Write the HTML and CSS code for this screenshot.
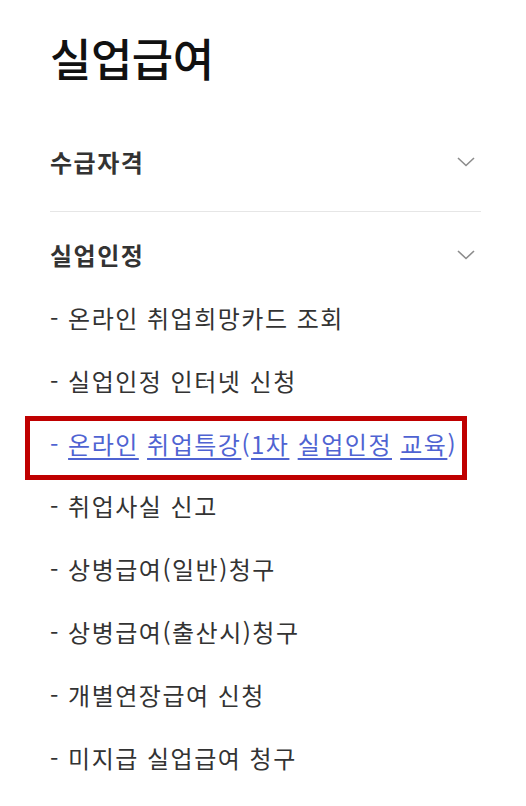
FILE: index.html
```html
<!DOCTYPE html>
<html lang="ko">
<head>
  <meta charset="UTF-8" />
  <title>실업급여</title>
  <link rel="stylesheet" href="styles.css">
</head>
<body>
  <div class="side-menu">
    <h2 class="menu-title">실업급여</h2>

    <div class="menu-group">
      <div class="group-head">
        <span class="group-name">수급자격</span>
        <svg class="chevron" width="18" height="10" viewBox="0 0 18 10"><path d="M1 1 L9 8.5 L17 1" fill="none" stroke="#8c8c8c" stroke-width="1.6"/></svg>
      </div>
    </div>

    <div class="menu-group open">
      <div class="group-head">
        <span class="group-name">실업인정</span>
        <svg class="chevron" width="18" height="10" viewBox="0 0 18 10"><path d="M1 1 L9 8.5 L17 1" fill="none" stroke="#8c8c8c" stroke-width="1.6"/></svg>
      </div>
      <ul class="sub-list">
        <li><a href="#">- 온라인 취업희망카드 조회</a></li>
        <li><a href="#">- 실업인정 인터넷 신청</a></li>
        <li class="current">- <a href="#">온라인</a> <a href="#">취업특강</a>(<a href="#">1차</a> <a href="#">실업인정</a> <a href="#">교육</a>)</li>
        <li><a href="#">- 취업사실 신고</a></li>
        <li><a href="#">- 상병급여(일반)청구</a></li>
        <li><a href="#">- 상병급여(출산시)청구</a></li>
        <li><a href="#">- 개별연장급여 신청</a></li>
        <li><a href="#">- 미지급 실업급여 청구</a></li>
      </ul>
    </div>
  </div>
</body>
</html>
```

FILE: styles.css
```css
body {
  margin: 0;
  background: #fff;
  font-family: "Noto Sans CJK KR", "Noto Sans", sans-serif;
  color: #222;
}
.side-menu {
  padding: 28px 45px 0 50px;
}
.menu-title {
  margin: 0 0 28px;
  font-size: 45px;
  line-height: 60px;
  font-weight: 500;
  color: #111;
  letter-spacing: -0.5px;
}
.group-head {
  display: flex;
  align-items: center;
  justify-content: space-between;
  padding: 34px 6px 37px 0;
  line-height: 24px;
}
.menu-group:first-of-type .group-head {
  border-bottom: 1px solid #e6e6e6;
}
.menu-group.open .group-head {
  padding: 31px 6px 20px 0;
}
.group-name {
  font-size: 24px;
  font-weight: 700;
  color: #333;
  letter-spacing: 1.5px;
}
.chevron {
  display: block;
}
.sub-list {
  list-style: none;
  margin: 0;
  padding: 0;
}
.sub-list li {
  position: relative;
  font-size: 24px;
  line-height: 62.8px;
  letter-spacing: 1.5px;
  color: #333;
}
.sub-list a {
  color: #333;
  text-decoration: none;
}
.sub-list li.current {
  color: #4f63d2;
}
.sub-list li.current a {
  color: #4f63d2;
  text-decoration: underline;
  text-underline-offset: 4px;
}
/* highlight box drawn over the current item */
.sub-list li.current::after {
  content: "";
  position: absolute;
  left: -25px;
  top: 3px;
  width: 432px;
  height: 54px;
  border: 5px solid #bf0000;
}
```
